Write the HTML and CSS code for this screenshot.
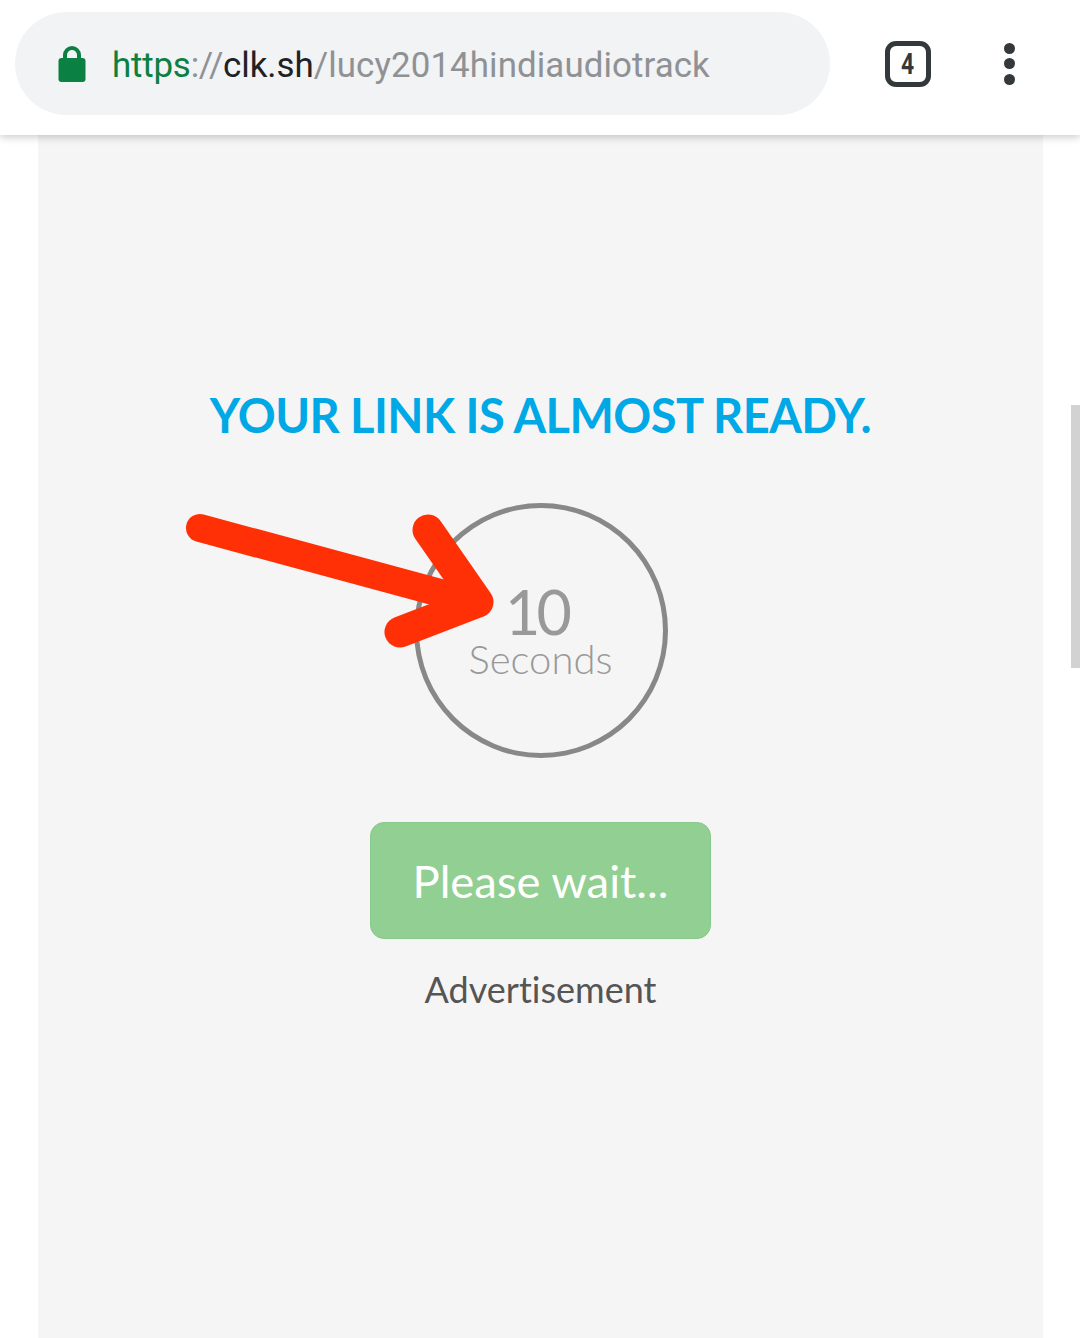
FILE: index.html
```html
<!DOCTYPE html>
<html lang="en">
<head>
    <meta charset="UTF-8" />
    <meta name="viewport" content="width=device-width, initial-scale=1.0" />
    <title>Your link is almost ready</title>
    <link rel="stylesheet" href="styles.css">
</head>
<body>
    <header class="toolbar">
      <div class="url-bar">
        <svg class="lock" width="28" height="36" viewBox="0 0 28 36">
          <path d="M7 14V9a7 7 0 0 1 14 0v5" fill="none" stroke="#0b8043" stroke-width="4"/>
          <rect x="0.5" y="12" width="27" height="24" rx="3" fill="#0b8043"/>
        </svg>
        <span class="url"><span class="scheme">https</span><span class="path sep">://</span><span class="host">clk.sh</span><span class="path">/lucy2014hindiaudiotrack</span></span>
      </div>
      <div class="tab-count"><span>4</span></div>
      <div class="menu-dots">
        <span></span>
        <span></span>
        <span></span>
      </div>
    </header>

    <main class="panel">
      <h1 class="title">YOUR LINK IS ALMOST READY.</h1>
      <div class="timer">
        <div class="count">10</div>
        <div class="count-label">Seconds</div>
      </div>
      <button class="wait-btn">Please wait...</button>
      <div class="ad-label">Advertisement</div>
    </main>

    <div class="scroll-thumb"></div>

    <!-- red arrow drawn on top of the screenshot -->
    <svg class="arrow" width="1080" height="1338" viewBox="0 0 1080 1338">
      <path d="M200 528L470 601" fill="none" stroke="#ff3006" stroke-width="28" stroke-linecap="round"/>
      <path d="M428 530L478 602L400 632" fill="none" stroke="#ff3006" stroke-width="31" stroke-linecap="round" stroke-linejoin="round"/>
    </svg>
</body>
</html>
```

FILE: styles.css
```css
html, body {
    margin: 0;
    height: 1338px;
    overflow: hidden;
    background-color: #ffffff;
}

.toolbar {
    position: relative;
    z-index: 2;
    display: flex;
    align-items: center;
    box-sizing: border-box;
    height: 135px;
    padding: 0 0 8px 15px;
    background-color: #ffffff;
    box-shadow: 0 2px 8px rgba(0, 0, 0, 0.22);
}

.url-bar {
    display: flex;
    align-items: center;
    box-sizing: border-box;
    width: 815px;
    height: 103px;
    padding-left: 43px;
    border-radius: 52px;
    background-color: #f1f3f4;
}

.lock {
    flex: none;
    margin-right: 26px;
}

.url {
    padding-top: 4px;
    font-family: "Roboto", sans-serif;
    font-size: 34.9px;
    white-space: nowrap;
}

.scheme {
    color: #0b8043;
    letter-spacing: -0.2px;
}

.host {
    color: #202124;
}

.path {
    color: #8f9194;
    letter-spacing: 0.08px;
}

.sep {
    letter-spacing: -0.4px;
}

.tab-count {
    box-sizing: border-box;
    width: 46px;
    height: 46px;
    margin-left: 55px;
    border: 5px solid #33383b;
    border-radius: 11px;
    color: #33383b;
    font-family: "Roboto", sans-serif;
    font-size: 30px;
    font-weight: 700;
    line-height: 35px;
    text-align: center;
}

.tab-count span {
    display: inline-block;
    transform: scaleX(0.76);
}

.menu-dots {
    display: flex;
    flex-direction: column;
    gap: 4.5px;
    margin-left: 73px;
}

.menu-dots span {
    width: 11px;
    height: 11px;
    border-radius: 50%;
    background-color: #33383b;
}

.panel {
    display: flex;
    flex-direction: column;
    align-items: center;
    box-sizing: border-box;
    width: 1005px;
    height: 1203px;
    margin-left: 38px;
    padding-top: 250px;
    background-color: #f5f5f5;
    font-family: "Lato", sans-serif;
}

.title {
    margin: 0 0 58px;
    color: #00a8e6;
    font-size: 47px;
    font-weight: 700;
    line-height: 60px;
    letter-spacing: -0.55px;
}

.timer {
    display: flex;
    flex-direction: column;
    align-items: center;
    box-sizing: border-box;
    width: 254px;
    height: 255px;
    padding-top: 75px;
    border: 5px solid #888888;
    border-radius: 50%;
    color: #999999;
}

.count {
    margin-right: 8px;
    font-size: 61px;
    line-height: 58px;
    letter-spacing: -4px;
}

.count-label {
    font-size: 40px;
    font-weight: 300;
    line-height: 37px;
}

.wait-btn {
    box-sizing: border-box;
    width: 341px;
    height: 117px;
    margin-top: 64px;
    border: 1px solid #88c98c;
    border-radius: 14px;
    background-color: #91cf92;
    color: #ffffff;
    font-family: "Lato", sans-serif;
    font-size: 45.4px;
}

.ad-label {
    margin-top: 27px;
    color: #555555;
    font-size: 36px;
    font-variant-ligatures: none;
    line-height: 46px;
}

.scroll-thumb {
    position: absolute;
    top: 405px;
    right: 0;
    width: 9px;
    height: 263px;
    background-color: #d2d2d2;
}

.arrow {
    position: absolute;
    top: 0;
    left: 0;
    z-index: 3;
    pointer-events: none;
}
```
